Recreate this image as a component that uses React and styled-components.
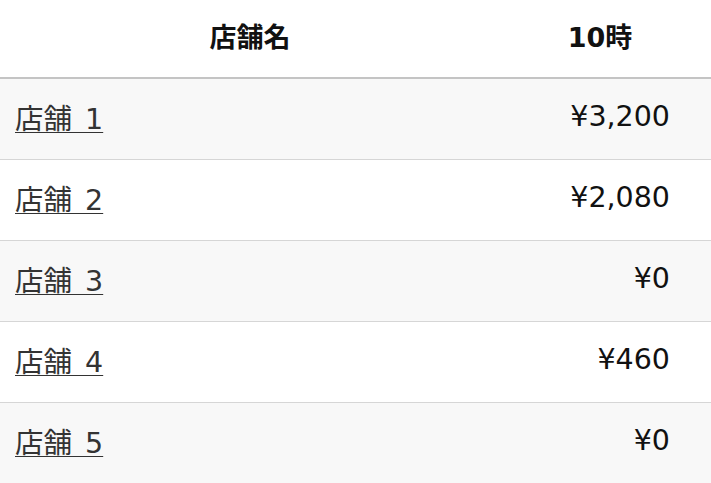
import React from "react";
import styled, { createGlobalStyle } from "styled-components";

const Global = createGlobalStyle`
  html, body { margin: 0; padding: 0; background: #fff; }
  body { font-family: "DejaVu Sans", "Noto Sans CJK JP", sans-serif; }
`;

const Table = styled.table`
  width: 711px;
  border-collapse: collapse;
  table-layout: fixed;
`;

const HeadCell = styled.th`
  height: 78px;
  box-sizing: border-box;
  padding: 0 ${(p) => (p.$num ? "41px 6px 30px" : "15px 6px")};
  text-align: center;
  font-size: 27px;
  font-weight: 700;
  color: #111;
  border-bottom: 2px solid #c4c4c4;
  width: ${(p) => (p.$num ? "auto" : "500px")};
`;

const Row = styled.tr`
  background: ${(p) => (p.$odd ? "#f8f8f8" : "#ffffff")};
  border-bottom: 1px solid #d6d6d6;
  &:last-child { border-bottom: none; }
`;

const Cell = styled.td`
  height: 81px;
  box-sizing: border-box;
  padding: 0 ${(p) => (p.$num ? "41px" : "15px")} 5px;
  text-align: ${(p) => (p.$num ? "right" : "left")};
  font-size: 28.5px;
  color: #111;
  vertical-align: middle;
`;

const StoreLink = styled.a`
  color: #333;
  word-spacing: 4px;
  text-decoration: underline;
  text-decoration-thickness: 1px;
  text-underline-offset: 3px;
`;

const rows = [
  { name: "店舗 1", value: "¥3,200" },
  { name: "店舗 2", value: "¥2,080" },
  { name: "店舗 3", value: "¥0" },
  { name: "店舗 4", value: "¥460" },
  { name: "店舗 5", value: "¥0" },
];

export default function App() {
  return (
    <>
      <Global />
      <Table>
        <thead>
          <tr>
            <HeadCell>店舗名</HeadCell>
            <HeadCell $num>10時</HeadCell>
          </tr>
        </thead>
        <tbody>
          {rows.map((r, i) => (
            <Row key={r.name} $odd={i % 2 === 0}>
              <Cell>
                <StoreLink href="#">{r.name}</StoreLink>
              </Cell>
              <Cell $num>{r.value}</Cell>
            </Row>
          ))}
        </tbody>
      </Table>
    </>
  );
}
